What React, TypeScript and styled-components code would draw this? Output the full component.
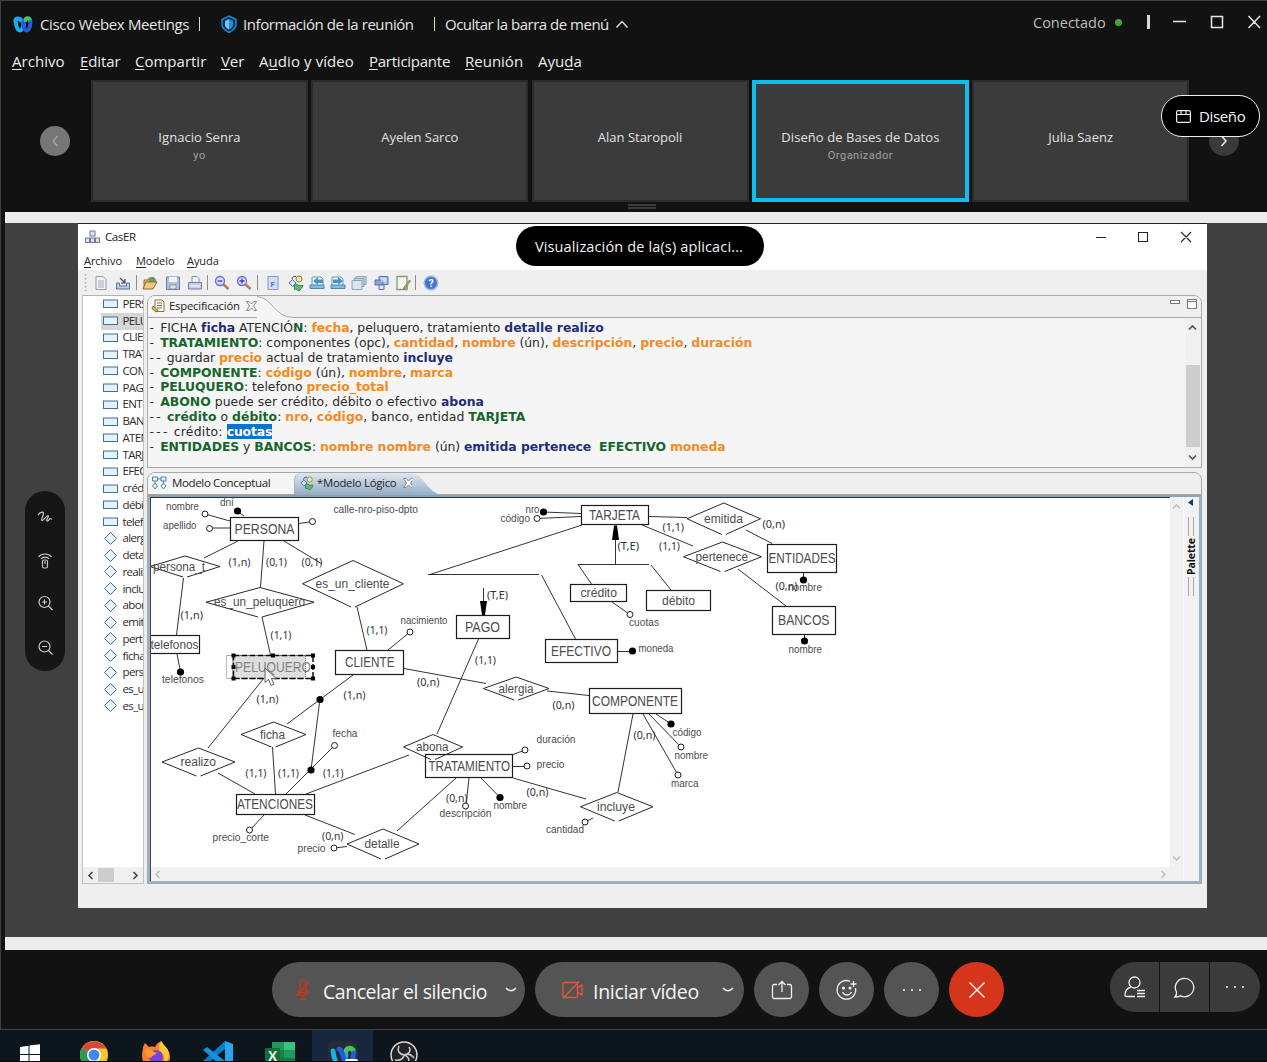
import React from 'react';
import styled, { createGlobalStyle } from 'styled-components';

const Global = createGlobalStyle`
  * { box-sizing: border-box; }
  body { margin: 0; background: #121212; overflow: hidden; }
`;

const ui = `'Open Sans', 'Noto Sans', sans-serif`;
const noto = `'Noto Sans', 'Open Sans', sans-serif`;

/* ---------- meeting window ---------- */
const Screen = styled.div`
  width: 1267px; height: 1062px; overflow: hidden; position: relative;
  display: flex; flex-direction: column; background: #121212; color: #e6e6e6;
  font-family: ${ui};
`;
const Meeting = styled.div`
  height: 1030px; flex: none; display: flex; flex-direction: column;
  border: 1px solid #414141; border-right: 0;
`;
const TitleBar = styled.header`
  height: 46px; flex: none; display: flex; align-items: center; padding-left: 12px; white-space: nowrap;
`;
const Label = styled.span<{ $size?: number; $track?: number; $w?: number; $color?: string; $dy?: number; $ml?: number }>`
  font-size: ${p => p.$size ?? 15}px; letter-spacing: ${p => p.$track ?? 0}px;
  color: ${p => p.$color ?? '#e4e4e4'}; line-height: 22px; white-space: nowrap;
  width: ${p => (p.$w ? `${p.$w}px` : 'auto')}; flex: none;
  margin-left: ${p => p.$ml ?? 0}px; padding-top: ${p => p.$dy ?? 0}px;
`;
const Bar = styled.i<{ $ml: number; $w?: number; $h?: number }>`
  flex: none; width: ${p => p.$w ?? 1}px; height: ${p => p.$h ?? 14}px; margin-left: ${p => p.$ml}px; background: #d8d8d8;
`;
const Glyph = styled.svg<{ $ml?: number }>`
  flex: none; display: block; overflow: visible; margin-left: ${p => p.$ml ?? 0}px;
`;
const Dot = styled.i`
  width: 7px; height: 7px; border-radius: 50%; background: #3faa3a; margin-left: 9px; flex: none;
`;
const WindowTools = styled.div`
  margin-left: auto; display: flex; align-items: center; height: 42px; align-self: flex-start; padding-right: 6px;
`;
const MenuBar = styled.nav`
  height: 33px; flex: none; display: flex; padding: 3px 0 0 11px;
`;
const MenuItem = styled.span<{ $w: number; $track: number }>`
  width: ${p => p.$w}px; font-size: 15px; letter-spacing: ${p => p.$track}px; line-height: 23px; color: #ececec; white-space: nowrap;
  u { text-underline-offset: 2px; text-decoration-thickness: 1px; }
`;
const Strip = styled.section`
  height: 122px; flex: none; display: flex; align-items: center;
`;
const Arrow = styled.div<{ $dim?: boolean; $ml: number }>`
  width: 30px; height: 30px; flex: none; border-radius: 50%; margin-left: ${p => p.$ml}px;
  background: ${p => (p.$dim ? '#767676' : '#3a3a3a')}; display: grid; place-items: center;
`;
const Tiles = styled.div`
  display: grid; grid-template-columns: repeat(5, 217px); gap: 3.3px; margin-left: 21px; height: 122px; flex: none;
`;
const Tile = styled.div<{ $active?: boolean }>`
  background: #3b3b3b; border: ${p => (p.$active ? '4px solid #0cbdf2' : '2px solid #2b2b2b')};
  display: flex; flex-direction: column; align-items: center; padding-top: ${p => (p.$active ? 43 : 45)}px;
`;
const TileName = styled.span<{ $track?: number }>`
  font-size: 13px; line-height: 20px; letter-spacing: ${p => p.$track ?? 0.06}px; color: #e2e2e2;
`;
const TileRole = styled.span`
  font: 11px/18px Roboto, sans-serif; letter-spacing: 0.5px; color: #a2a2a2;
`;
const Grip = styled.div`
  height: 10px; flex: none; display: flex; flex-direction: column; gap: 1px; align-items: center; padding: 2px 0 0 16px;
  i { width: 28px; height: 2px; background: #3c3c3c; }
`;
const Stage = styled.main`
  margin-left: 4px; height: 738px; flex: none; display: flex; flex-direction: column;
  border-top: 11px solid #ececec; border-bottom: 13px solid #ececec;
  background: #404040; padding-left: 73px;
`;
const LayoutButton = styled.div`
  position: absolute; left: 1161px; top: 95px; width: 99px; height: 42px; border-radius: 21px;
  border: 1.5px solid #f0f0f0; background: #000; display: flex; align-items: center; padding-left: 14px;
`;
const ShareBadge = styled.div`
  position: absolute; left: 516px; top: 226px; width: 248px; height: 40px; border-radius: 20px; background: #000;
  display: flex; justify-content: center; align-items: center; padding: 2px 2px 0 0;
`;
const SideTools = styled.div`
  position: absolute; left: 25px; top: 491px; width: 40px; height: 180px; border-radius: 20px; background: #161616;
  display: flex; flex-direction: column; align-items: center; padding-top: 18px; gap: 27.5px;
`;

/* ---------- call controls ---------- */
const Controls = styled.footer`
  height: 78px; flex: none; display: flex; padding: 12px 7px 0 271px; gap: 10px;
`;
const Pill = styled.div<{ $w: number; $pl: number }>`
  width: ${p => p.$w}px; height: 55px; border-radius: 28px; background: #545454; flex: none;
  display: flex; align-items: center; padding-left: ${p => p.$pl}px;
`;
const Round = styled.div<{ $red?: boolean }>`
  width: 55px; height: 55px; border-radius: 50%; flex: none; display: grid; place-items: center;
  background: ${p => (p.$red ? '#d5361b' : '#545454')};
`;
const Group = styled.div`
  margin-left: auto; display: grid; grid-template-columns: 49px 49px 50px; gap: 1px; width: 150px; height: 50px;
  border-radius: 25px; overflow: hidden;
`;
const GroupCell = styled.div`
  background: #3b3b3b; display: grid; place-items: center;
`;
const Taskbar = styled.div`
  height: 32px; flex: none; display: flex; background: #0d151d; border-bottom: 1px solid #05080d;
`;
const Task = styled.div<{ $on?: boolean; $w?: number }>`
  width: ${p => p.$w ?? 62}px; height: 31px; overflow: hidden; padding-top: 11px; flex: none;
  display: flex; justify-content: center; background: ${p => (p.$on ? '#17273d' : 'transparent')};
`;

/* ---------- shared application window ---------- */
const AppWindow = styled.div`
  width: 1129px; height: 685px; background: #efefef; color: #222; display: flex; flex-direction: column;
  border-top: 1px solid #1d2340; flex: none;
`;
const AppTitle = styled.div`
  height: 28px; background: #fff; display: flex; align-items: center; padding: 0 15px 2px 7px; flex: none;
`;
const AppMenu = styled.div`
  height: 18px; background: #fff; display: flex; flex: none; padding-left: 6px;
`;
const MenuWord = styled.span<{ $w?: number }>`
  width: ${p => (p.$w ? `${p.$w}px` : 'auto')}; flex: none;
  font-size: 11px; line-height: 18px; letter-spacing: -0.05px; color: #222;
  u { text-underline-offset: 2px; }
`;
const AppTools = styled.div`
  height: 25px; flex: none; display: flex; align-items: center; padding: 0 0 0 6px;
`;
const Slot = styled.span<{ $w: number }>`
  width: ${p => p.$w}px; display: flex; justify-content: center; flex: none;
`;
const Divider = styled.i<{ $w: number }>`
  width: ${p => p.$w}px; height: 15px; flex: none;
  background: linear-gradient(#8c8c8c, #8c8c8c) center / 1px 100% no-repeat;
`;
const Body = styled.div`
  height: 589px; flex: none; display: flex; gap: 3px; padding-left: 4px;
`;
const Tree = styled.aside`
  width: 62px; height: 589px; flex: none; display: flex; flex-direction: column; background: #fff;
  border: 1px solid #c2c2c2; border-top-color: #b5b5b5; overflow: hidden;
`;
const TreeRows = styled.div`
  height: 571px; flex: none; overflow: hidden;
`;
const TreeRow = styled.div<{ $on?: boolean }>`
  height: 16.76px; margin-left: 18px; display: flex; align-items: center; overflow: hidden; white-space: nowrap;
  background: ${p => (p.$on ? '#d6d6d6' : 'transparent')};
  svg { flex: none; margin-left: 2px; width: 15px; }
  span { font-size: 11.5px; letter-spacing: -0.65px; line-height: 16px; margin-left: 4.5px; padding-bottom: 1px; color: #2c2c2c; }
`;
const HScroll = styled.div<{ $h: number; $pad: number }>`
  height: ${p => p.$h}px; flex: none; background: #f0f0f0; display: flex; align-items: center;
  padding: 0 ${p => p.$pad}px; justify-content: space-between;
`;
const Thumb = styled.i`
  width: 16px; height: 14px; background: #cdcdcd; margin-right: 14px;
`;
const Right = styled.div`
  width: 1055px; flex: none; display: flex; flex-direction: column; gap: 4px;
`;
const Panel = styled.section<{ $h: number }>`
  height: ${p => p.$h}px; flex: none; border: 1px solid #a8a8a8; border-radius: 8px 8px 0 0; overflow: hidden;
  display: flex; flex-direction: column; background: #f0f0f0;
`;
const TabBar = styled.div<{ $h: number }>`
  height: ${p => p.$h}px; flex: none; display: flex; background: #efefef; border-bottom: 1px solid #a8a8a8;
`;
const Tab = styled.div<{ $w: number; $pl: number; $active?: boolean }>`
  width: ${p => p.$w}px; display: flex; align-items: center; padding: 0 0 1px ${p => p.$pl}px; flex: none;
  background: ${p => (p.$active ? 'linear-gradient(#dfe7ef, #95afc9)' : '#f5f5f5')};
  border-radius: 7px 0 0 0; border-left: ${p => (p.$active ? '1px solid #a9b3bd' : '0')};
`;
const TabEnd = styled.svg`
  flex: none; display: block; margin-left: -1px;
`;
const PanelBtns = styled.div`
  margin-left: auto; display: flex; padding: 3px 4px 0 0; gap: 7px;
`;
const SpecArea = styled.div`
  flex: 1; display: flex; background: #f5f5f5; min-height: 0;
`;
const Spec = styled.div`
  width: 1037px; padding: 2px 0 0 2px; font-family: 'DejaVu Sans', Verdana, sans-serif; font-size: 12.4px; color: #2b2b2b;
`;
const Dash = styled.span`
  letter-spacing: 2.25px; margin-left: -0.5px;
`;
const Line = styled.p<{ $track?: number }>`
  margin: 0; height: 14.87px; line-height: 15px; white-space: pre; letter-spacing: ${p => p.$track ?? 0}px;
  b { font-weight: 700; }
  b.g { color: #17652c; } b.o { color: #f58a22; } b.n { color: #1f2d78; }
  b.sel { background: #0a72cf; color: #fff; letter-spacing: -0.15px; }
`;
const VScroll = styled.div<{ $w: number; $pb?: number }>`
  width: ${p => p.$w}px; flex: none; background: #f0f0f0; display: flex; flex-direction: column; align-items: center;
  justify-content: space-between; padding: 6px 0 ${p => p.$pb ?? 6}px;
`;
const VThumb = styled.i`
  width: 14px; height: 82px; background: #cdcdcd; margin-top: 22px; margin-bottom: -5px;
`;
const Canvas = styled.div`
  flex: 1; min-height: 0; display: flex; border: 2px solid #9fb0c6; border-top-color: #8c9fb8; background: #f0f0f0;
`;
const CanvasMain = styled.div`
  width: 1020px; flex: none; display: flex; flex-direction: column; border-left: 1px solid #444;
`;
const Diagram = styled.svg`
  display: block; width: 1019px; height: 370px; background: #fff; border-top: 1px solid #333; flex: none;
`;
const Palette = styled.div`
  width: 15px; flex: none; display: flex; flex-direction: column; align-items: center; padding: 2px 1px 0 0; gap: 11px; background: #f2f2f2;
  border-left: 1px solid #fafafa;
  b { writing-mode: vertical-rl; transform: rotate(180deg); font: 700 10.5px ${noto}; color: #111; line-height: 12px; margin: -9px 0; letter-spacing: -0.1px; }
`;
const Ribs = styled.i`
  width: 6px; height: 19px; border-left: 1px solid #aaa; border-right: 1px solid #aaa; flex: none;
`;

/* ---------- diagram primitives ---------- */
const ink = '#1c1c1c';
type TP = { x: number; to: number; y: number; s: number; children: string; c?: string; f?: string };
const T = ({ x, to, y, s, children, c = '#4c4c4c', f = "'Liberation Sans', Arial, sans-serif" }: TP) => (
  <text x={x} y={y + s * 0.35} fontSize={s} fontFamily={f} fill={c} textLength={to - x} lengthAdjust="spacingAndGlyphs">{children}</text>
);
const boxes: [string, number, number, number, number, number, number, number][] = [
  ['PERSONA', 230.5, 517.5, 298.5, 540.5, 234.5, 294.5, 14],
  ['CLIENTE', 335.5, 650.5, 403.5, 674.5, 345, 394.5, 14],
  ['ATENCIONES', 236.5, 794.5, 314.5, 814.5, 237, 313, 14],
  ['TRATAMIENTO', 425.5, 754.5, 512.5, 777.5, 428.5, 510, 14],
  ['PAGO', 456.5, 615.5, 509.5, 638.5, 465, 500, 14],
  ['COMPONENTE', 589.5, 688.5, 681.5, 713.5, 592, 678, 14],
  ['TARJETA', 581.5, 505.5, 648.5, 524.5, 589, 640, 14],
  ['EFECTIVO', 545.5, 639.5, 617.5, 662.5, 551, 611, 14],
  ['ENTIDADES', 767.5, 544.5, 836.5, 572.5, 768.5, 835.5, 14],
  ['BANCOS', 772.5, 606.5, 835.5, 634.5, 778, 829.5, 14],
  ['crédito', 570.5, 584.5, 626.5, 601.5, 580.5, 617, 12.5],
  ['débito', 646.5, 590.5, 710.5, 610.5, 662, 695, 12.5],
  ['telefonos', 140.5, 635.5, 199.5, 653.5, 150.5, 198.5, 12.5],
];
const diamonds: [string, number, number, number, number, number, number][] = [
  ['persona_t', 150, 220, 556, 577, 153, 205],
  ['es_un_peluquero', 206, 314, 587.5, 617, 214, 305],
  ['es_un_cliente', 302.5, 403.5, 560.5, 607, 315.5, 389.5],
  ['ficha', 241, 306, 722, 747, 260, 285],
  ['realizo', 162, 235, 748, 776, 180.5, 216],
  ['detalle', 347, 419, 829, 859, 364.5, 399.5],
  ['abona', 403.5, 462.5, 734.5, 759.5, 416, 448.5],
  ['alergia', 483.5, 549, 677, 700, 498.5, 533.5],
  ['incluye', 580.5, 653, 792.5, 821, 597, 635],
  ['emitida', 687, 760.5, 503, 534.5, 704, 743],
  ['pertenece', 683.5, 761.5, 542, 571.5, 695.5, 748],
];
const links: number[][] = [
  [205, 514, 230, 521], [237, 511, 244, 516], [210, 528, 230, 528], [312, 521.5, 299, 523.5],
  [238, 541, 204, 558], [264, 541, 260.5, 587], [284, 541, 322, 564], [183.5, 578, 176.5, 635], [177, 654, 180.5, 672],
  [262, 617, 270.5, 655], [264, 678, 208, 748], [357, 607, 367, 650], [388, 650, 410, 632], [353, 675, 287, 724],
  [320, 699, 311, 770], [334.5, 745.5, 286, 794], [404, 668.5, 486, 683.5], [272.5, 747, 275.5, 794], [218, 773, 255, 794],
  [264, 815, 250, 830], [305, 815, 355, 834.5], [334, 848, 347, 846.5], [409, 755, 306, 794], [525, 750, 513, 754.5],
  [513, 766.5, 527, 766.5], [478.5, 639, 437, 734], [547, 691, 589, 695.5], [633, 714, 618, 792], [643, 714, 678, 775],
  [649, 714, 681, 747], [656, 714, 671, 724], [513, 778, 586, 799], [585, 822, 593, 818], [456, 778, 397, 831],
  [469, 778, 466, 806], [481, 778, 500, 797.5], [543.5, 512, 581, 513.5], [537, 518.5, 581, 516.5], [582, 525, 430, 574.5],
  [428, 574.5, 539, 574.5], [541.5, 575, 575.5, 639], [615.5, 564, 615.5, 530], [578, 564.5, 649, 564.5], [578, 564.5, 591.5, 584],
  [651, 565, 671, 590], [612, 602, 630, 614.5], [618, 651.5, 632.5, 651.5], [649, 516.5, 687, 517.5], [642, 525, 693, 546],
  [746, 530, 772, 543.5], [803.5, 573, 803.5, 580], [738, 569, 786, 606], [804.5, 635, 804.5, 641], [483.5, 588, 483.5, 605],
];
const open: number[][] = [[205, 514], [209.5, 528.5], [312.5, 521.5], [410, 632], [334.5, 745.5], [249.5, 830], [334, 848], [525, 750], [527, 766],
  [678, 775], [681, 747], [585, 822], [465.5, 806], [537, 518.5], [630, 614.5]];
const solid: number[][] = [[237.5, 511], [180.5, 672], [320, 699.5], [311, 770], [671, 724], [500, 797.5], [543.5, 512], [632.5, 651], [803.5, 580], [804.5, 641]];
const attrs: [string, number, number, number][] = [
  ['nombre', 166, 199, 506.5], ['dni', 220, 233.5, 502.5], ['apellido', 163, 196.5, 525.5], ['calle-nro-piso-dpto', 333.5, 418, 509.5],
  ['telefonos', 162, 204, 679.5], ['nacimiento', 400.5, 447.5, 620.5], ['fecha', 332.5, 357.5, 733.5], ['precio_corte', 212.5, 269, 837.5],
  ['precio', 297.5, 325.5, 848], ['duración', 536.5, 575.5, 739.5], ['precio', 536.5, 564.5, 764.5], ['código', 672.5, 701.5, 732],
  ['nombre', 674.5, 708, 755], ['marca', 671, 698.5, 783], ['cantidad', 546, 584, 829.5], ['descripción', 439.5, 491.5, 813.5],
  ['nombre', 493.5, 527, 805.5], ['nro', 525.5, 539.5, 509.5], ['código', 500.5, 530, 518], ['cuotas', 629, 659, 622.5],
  ['moneda', 638.5, 673.5, 648.5], ['nombre', 788, 822, 587.5], ['nombre', 788.5, 822, 649.5],
];
const cards: [string, number, number, number][] = [
  ['(1,n)', 228.5, 250.5, 561.5], ['(0,1)', 266, 287, 561.5], ['(0,1)', 301.5, 322.5, 561.5], ['(1,n)', 180.5, 203, 615], ['(1,1)', 270.5, 291.5, 635],
  ['(1,n)', 256.5, 278.5, 699], ['(1,1)', 366.5, 387.5, 629.5], ['(1,n)', 343.5, 365.5, 695], ['(0,n)', 417, 439.5, 681.5], ['(1,1)', 245.5, 266.5, 773],
  ['(1,1)', 278, 299, 773], ['(1,1)', 323, 343.5, 773], ['(0,n)', 322, 343.5, 835.5], ['(1,1)', 475, 496, 660], ['(0,n)', 552.5, 574.5, 704.5],
  ['(0,n)', 633.5, 655.5, 734.5], ['(0,n)', 526.5, 548.5, 792], ['(0,n)', 446, 467.5, 798], ['(T,E)', 487, 508, 595], ['(T,E)', 617.5, 639, 545.5],
  ['(1,1)', 662.5, 684, 527], ['(1,1)', 659, 680, 545.5], ['(0,n)', 762.5, 785, 523.5], ['(0,n)', 775.5, 797.5, 585.5],
];

const ErDiagram = () => (
  <Diagram viewBox="151 498 1019 369">
    {links.map((l, i) => <line key={i} x1={l[0]} y1={l[1]} x2={l[2]} y2={l[3]} stroke={ink} strokeWidth={0.9} />)}
    {boxes.map(b => (
      <g key={b[0]}>
        <rect x={b[1]} y={b[2]} width={b[3] - b[1]} height={b[4] - b[2]} fill={b[0] === 'TRATAMIENTO' ? 'none' : '#fff'} stroke={ink} strokeWidth={1.2} />
        <T x={b[5]} to={b[6]} y={(b[2] + b[4]) / 2} s={b[7]}>{b[0]}</T>
      </g>
    ))}
    {diamonds.map(d => {
      const cx = (d[1] + d[2]) / 2, cy = (d[3] + d[4]) / 2;
      return (
        <g key={d[0]}>
          <path d={`M${d[1]} ${cy}L${cx} ${d[3]}L${d[2]} ${cy}L${cx + 2} ${d[4]}M${cx - 2} ${d[4]}L${d[1]} ${cy}`} fill="none" stroke={ink} strokeWidth={0.95} />
          <T x={d[5]} to={d[6]} y={cy} s={12}>{d[0]}</T>
        </g>
      );
    })}
    {open.map((c, i) => <circle key={i} cx={c[0]} cy={c[1]} r={3} fill="#fff" stroke={ink} />)}
    {solid.map((c, i) => <circle key={i} cx={c[0]} cy={c[1]} r={3.6} fill="#000" />)}
    <path d="M480 601h7l-2 14h-3zM614 525.500h3l2 14.500h-7z" fill="#000" />
    {attrs.map((a, i) => <T key={i} x={a[1]} to={a[2]} y={a[3]} s={10.5}>{a[0]}</T>)}
    {cards.map((a, i) => <T key={i} x={a[1]} to={a[2]} y={a[3]} s={11.5} f={noto} c="#333">{a[0]}</T>)}
    <rect x="233" y="655" width="80" height="23.500" fill="#fff" />
    <rect x="228" y="655.500" width="77.500" height="23" fill="#dfdfdf" stroke="#555" strokeDasharray="1 1" />
    <rect x="226.500" y="655.500" width="6" height="23" fill="#fff" stroke="#777" strokeDasharray="1 1" />
    <rect x="233.500" y="655.500" width="79.500" height="23" fill="none" stroke="#000" strokeWidth="1.400" strokeDasharray="6 2" />
    {[[233.5, 655.5], [273, 655.5], [313, 655.5], [233.5, 667], [313, 667], [233.5, 678.5], [313, 678.5]].map((p, i) => (
      <rect key={i} x={p[0] - 2} y={p[1] - 2} width="4" height="4" fill="#000" />
    ))}
    <T x={235} to={311} y={667} s={14} c="#808080">PELUQUERO</T>
    <path d="M265 668v14.500l3.500-3 2.500 6 3-1.200-2.500-5.800h4.800z" fill="#f4f4f4" stroke="#555" strokeWidth="0.900" />
  </Diagram>
);

const WebexLogo = ({ w = 20 }: { w?: number }) => (
  <Glyph width={w} height={w * 0.85} viewBox="0 0 20 17" fill="none" strokeWidth="4" strokeLinecap="round">
    <path d="M2.500 4.500C3 9 4 14.500 7 14.500c2 0 3-3 3.800-6" stroke="#10b4ea" />
    <path d="M12 4.500C13 1.500 16.500 1.500 17.200 5" stroke="#3fc65f" />
    <path d="M7.500 3C10 3.500 10 14.500 13.500 14.500c2.500 0 3.800-4 4-8.500" stroke="#2459e0" />
    <path d="M2.500 4.500C3 2 6 2 7.500 4" stroke="#14a9f0" />
  </Glyph>
);
const Chevron = ({ d, c = '#ddd', w = 8, h = 8, sw = 1.2, ml = 0 }: { d: string; c?: string; w?: number; h?: number; sw?: number; ml?: number }) => (
  <Glyph $ml={ml} width={w} height={h} viewBox={`0 0 ${w} ${h}`}><path d={d} fill="none" stroke={c} strokeWidth={sw} /></Glyph>
);
const Cross = () => (
  <Glyph $ml={7} width="11" height="10" viewBox="0 0 11 10"><path d="M.5.5h2.500L5.500 3 8 .5h2.500L7.500 5l3 4.500H8L5.500 7 3 9.500H.5L3.500 5z" fill="#fff" stroke="#777" strokeWidth=".9" /></Glyph>
);
const Linked = ({ s = 15 }: { s?: number }) => (
  <Glyph width={s} height={s} viewBox="0 0 16 16" fill="none">
    <circle cx="11" cy="4" r="3" fill="#f3e7a8" stroke="#8a8550" />
    <path d="M4.500 4.500L8 8l-3.500 3.500L1 8z" fill="#d8e9fb" stroke="#3a6ea8" />
    <path d="M6 10.500l3-1.500 1 1.500h5l-1.500 3L11 16l-3-2-1.500.5z" fill="#5fbb6c" stroke="#2a7a3a" strokeWidth=".8" />
    <path d="M4 4c0-2 2-3 4-2.500" stroke="#333" />
  </Glyph>
);

const art: Record<string, React.ReactNode> = {
  page: <><path d="M3 1.500h7l3 3v10H3z" fill="#f5f3ea" stroke="#8b93a5" /><path d="M5 6h6M5 8h6M5 10h6M5 12h6" stroke="#8fa6c8" /></>,
  importer: <><path d="M1.500 8v6h13V8h-3v3h-7V8z" fill="#b5cde8" stroke="#4a6a96" /><path d="M5 3l5 5M10 4v4H6" fill="none" stroke="#333" strokeWidth="1.200" /></>,
  open: <><path d="M2 13V5h4l1-2h5v4" fill="#e9b75a" stroke="#8b5c20" /><path d="M7 5c2-4 7-3 7 2H8z" fill="#4aa05a" stroke="#2a7a3a" strokeWidth=".6" /><path d="M1 14l3-7h11l-4 7z" fill="#f0c674" stroke="#8b5c20" /></>,
  save: <><path d="M1.500 2h13v12.500h-13z" fill="#a8bdd6" stroke="#5b7393" /><path d="M4 2h8v5H4z" fill="#f0f4f4" /><path d="M5 10h6v4H5z" fill="#dfe9cf" stroke="#5b7393" strokeWidth=".7" /></>,
  print: <><path d="M5 7V1.500h5l2 2V7" fill="#eef3fb" stroke="#7a86b8" /><path d="M1.500 7.500h13V14h-13z" fill="#c3cbe6" stroke="#6772a8" /><path d="M3 11h10" stroke="#fff" /></>,
  out: <><path d="M9 9l5.500 5" stroke="#b9722e" strokeWidth="2.500" /><circle cx="6" cy="6" r="4.500" fill="#d9dcff" stroke="#5a5fd0" strokeWidth="1.300" /><path d="M3.500 6h5" stroke="#2b2f9a" strokeWidth="1.300" /></>,
  in: <><path d="M9 9l5.500 5" stroke="#b9722e" strokeWidth="2.500" /><circle cx="6" cy="6" r="4.500" fill="#d9dcff" stroke="#5a5fd0" strokeWidth="1.300" /><path d="M3.500 6h5M6 3.500v5" stroke="#2b2f9a" strokeWidth="1.300" /></>,
  doc: <><path d="M3 1.500h10v13H3z" fill="#cfdef5" stroke="#7690c0" /><text x="5.500" y="11.500" fontSize="8" fontWeight="700" fill="#5560c8" fontFamily="Roboto, sans-serif">F</text></>,
  left: <><path d="M3 2h9l2 2v9H3z" fill="#f3f7fb" stroke="#6a8db0" /><path d="M1 13.500h14V10H1z" fill="#7fb5dd" stroke="#3b7cab" /><path d="M4 6l5-4v2.500h5v3.500H9V10z" fill="#2f8fc4" /></>,
  right: <><path d="M2 2h9l2 2v9H2z" fill="#f3f7fb" stroke="#6a8db0" /><path d="M1 13.500h14V10H1z" fill="#7fb5dd" stroke="#3b7cab" /><path d="M13 6L8 2v2.500H3V8h5v2z" fill="#2f8fc4" /></>,
  stack: <><path d="M5 1.500h10v8H5z" fill="#bcd3e4" stroke="#7e9cb4" /><path d="M3 3.500h10v8H3z" fill="#bcd3e4" stroke="#7e9cb4" /><path d="M1 5.500h10v9H1z" fill="#d5e4ef" stroke="#7e9cb4" /></>,
  boxes: <><path d="M6 1.500h9v8H6z" fill="#a9bfe6" stroke="#4a68a8" /><path d="M2 5h8v5H2z" fill="#7d9bd6" stroke="#4a68a8" /><path d="M6 10h5v4.500H6z" fill="#dbe5f7" stroke="#4a68a8" /><path d="M8 4h5M8 6h5" stroke="#fff" /></>,
  edit: <><path d="M2 1.500h10v13H2z" fill="#f2f7ee" stroke="#7d8f7a" strokeWidth="1.300" /><path d="M14.500 5L9 12l-1 2.500L10.500 13 15.500 6z" fill="#c9a05a" stroke="#80602a" strokeWidth=".7" /><path d="M12 10v4H8" stroke="#4aa05a" fill="none" /></>,
  help: <><circle cx="8" cy="8" r="6.700" fill="#3566c4" stroke="#8fb0ea" strokeWidth="1.500" /><text x="8" y="11.800" textAnchor="middle" fontSize="10.500" fontWeight="700" fill="#fff" fontFamily="Roboto, sans-serif">?</text></>,
};
const Tool = ({ n, w = 21.6 }: { n: string; w?: number }) => (
  <Slot $w={w}>{n === 'link' ? <Linked s={16} /> : <svg width="16" height="16" viewBox="0 0 16 16" opacity="0.9">{art[n]}</svg>}</Slot>
);

const entities = ['PERSONA', 'PELUQUERO', 'CLIENTE', 'TRATAMIENTO', 'COMPONENTE', 'PAGO', 'ENTIDADES', 'BANCOS', 'ATENCIONES', 'TARJETA', 'EFECTIVO', 'crédito', 'débito', 'telefonos'];
const relations = ['alergia', 'detalle', 'realizo', 'incluye', 'abona', 'emitida', 'pertenece', 'ficha', 'persona_t', 'es_un_peluquero', 'es_un_cliente'];

const CasER = () => (
  <AppWindow>
    <AppTitle>
      <Glyph width="15" height="14" viewBox="0 0 15 14" fill="#dfe3f2" stroke="#6f7896">
        <rect x="5" y="1" width="5" height="5" /><rect x=".5" y="8" width="4" height="4.500" /><rect x="5.500" y="8" width="4" height="4.500" /><rect x="10.500" y="8" width="4" height="4.500" />
      </Glyph>
      <Label $size={11.5} $color="#222" $ml={5} $w={31} $track={-0.4}>CasER</Label>
      <Glyph $ml={960} width="96" height="12" viewBox="0 0 96 12" fill="none" stroke="#222" strokeWidth="1.100">
        <path d="M0 6.500h10M42.500 1.500h9v9h-9zM85 1l10 10M95 1L85 11" />
      </Glyph>
    </AppTitle>
    <AppMenu>
      <MenuWord $w={52}><u>A</u>rchivo</MenuWord><MenuWord $w={51}><u>M</u>odelo</MenuWord><MenuWord><u>A</u>yuda</MenuWord>
    </AppMenu>
    <AppTools>
      <Glyph width="3" height="17" viewBox="0 0 3 17"><path d="M1.500 0v17" stroke="#aaa" strokeWidth="1.500" strokeDasharray="1.500 2.500" /></Glyph>
      <Slot $w={2.5} />
      <Tool n="page" w={22} /><Tool n="importer" w={22} /><Divider $w={5} />
      <Tool n="open" w={23.5} /><Tool n="save" w={22} /><Tool n="print" w={21} /><Divider $w={5} />
      <Tool n="out" w={23.5} /><Tool n="in" w={21} /><Divider $w={6.5} />
      <Tool n="doc" w={24} /><Tool n="link" w={21} /><Tool n="left" w={21} /><Tool n="right" w={21.5} /><Tool n="stack" w={21.5} /><Tool n="boxes" w={22} /><Tool n="edit" w={21} /><Divider $w={5} />
      <Tool n="help" w={25} />
    </AppTools>
    <Body>
      <Tree>
        <TreeRows>
          {entities.map((e, i) => (
            <TreeRow key={e} $on={i === 1}>
              <svg width="15" height="10" viewBox="0 0 15 10"><rect x=".5" y="1" width="14" height="7.500" fill="#e4f2fc" stroke="#3e6f9f" /></svg><span>{e}</span>
            </TreeRow>
          ))}
          {relations.map(e => (
            <TreeRow key={e}>
              <svg width="15" height="14" viewBox="0 0 15 14"><path d="M7.500 .5l6 6-6 6-6-6z" fill="#eaf5fd" stroke="#3e6f9f" /></svg><span>{e}</span>
            </TreeRow>
          ))}
        </TreeRows>
        <HScroll $h={16} $pad={4}>
          <Chevron d="M5.500 1L2 4.500 5.500 8" c="#444" w={6} h={9} sw={1.6} /><Thumb /><Chevron d="M.5 1L4 4.500.5 8" c="#444" w={6} h={9} sw={1.6} />
        </HScroll>
      </Tree>
      <Right>
        <Panel $h={173}>
          <TabBar $h={22}>
            <Tab $w={110} $pl={4}>
              <Glyph width="13" height="14" viewBox="0 0 13 14"><path d="M3 1h7l2 2v9.500H3z" fill="#fff8dc" stroke="#8a7440" /><path d="M5 4h5M5 6.500h5M5 9h5" stroke="#5a78b0" /><path d="M1 7l5 4-1 2-5-3z" fill="#e0b84a" stroke="#7a6020" strokeWidth=".7" /></Glyph>
              <Label $size={11.3} $color="#222" $ml={4} $w={70} $track={-0.2}>Especificación</Label><Cross />
            </Tab>
            <TabEnd width="46" height="22" viewBox="0 0 46 22"><path d="M0 0C18 0 18 21.500 42 21.500V22H0z" fill="#f5f5f5" /><path d="M-10 .5H0C14 .5 18 21.500 36 21.500H46" fill="none" stroke="#a8a8a8" /></TabEnd>
            <PanelBtns>
              <Glyph width="10" height="10" viewBox="0 0 10 10"><rect x=".5" y="1.500" width="9" height="3" fill="#fff" stroke="#777" /></Glyph>
              <Glyph width="10" height="10" viewBox="0 0 10 10"><rect x=".5" y=".5" width="9" height="9" fill="#fff" stroke="#777" /><path d="M0 2.500h10" stroke="#777" /></Glyph>
            </PanelBtns>
          </TabBar>
          <SpecArea>
            <Spec>
              <Line $track={-0.035}><Dash>-</Dash> FICHA <b className="n">ficha</b> ATENCIÓ<b className="g">N</b>: <b className="o">fecha</b>, peluquero, tratamiento <b className="n">detalle realizo</b></Line>
              <Line $track={-0.03}><Dash>-</Dash> <b className="g">TRATAMIENTO</b>: componentes (opc), <b className="o">cantidad</b>, <b className="o">nombre</b> (ún), <b className="o">descripción</b>, <b className="o">precio</b>, <b className="o">duración</b></Line>
              <Line $track={-0.07}><Dash>--</Dash> guardar <b className="o">precio</b> actual de tratamiento <b className="n">incluye</b></Line>
              <Line $track={-0.03}><Dash>-</Dash> <b className="g">COMPONENTE</b>: <b className="o">código</b> (ún), <b className="o">nombre</b>, <b className="o">marca</b></Line>
              <Line $track={-0.04}><Dash>-</Dash> <b className="g">PELUQUERO</b>: telefono <b className="o">precio_total</b></Line>
              <Line $track={0.03}><Dash>-</Dash> <b className="g">ABONO</b> puede ser crédito, débito o efectivo <b className="n">abona</b></Line>
              <Line $track={0.03}><Dash>--</Dash> <b className="g">crédito</b> o <b className="g">débito</b>: <b className="o">nro</b>, <b className="o">código</b>, banco, entidad <b className="g">TARJETA</b></Line>
              <Line $track={0.2}><Dash>---</Dash> crédito: <b className="sel">cuotas</b></Line>
              <Line $track={-0.045}><Dash>-</Dash> <b className="g">ENTIDADES</b> y <b className="g">BANCOS</b>: <b className="o">nombre nombre</b> (ún) <b className="n">emitida pertenece</b>  <b className="g">EFECTIVO</b> <b className="o">moneda</b></Line>
            </Spec>
            <VScroll $w={15}>
              <Chevron d="M1 5.500L4.500 2 8 5.500" c="#555" w={9} h={7} sw={1.7} /><VThumb /><Chevron d="M1 1.500L4.500 5 8 1.500" c="#555" w={9} h={7} sw={1.7} />
            </VScroll>
          </SpecArea>
        </Panel>
        <Panel $h={412}>
          <TabBar $h={22}>
            <Tab $w={146} $pl={4}>
              <Glyph width="15" height="14" viewBox="0 0 15 14" fill="#e8f3fc" stroke="#4a83b8"><path d="M.5 1h5v4h-5zM9 1h5v4H9zM5.500 3H9M3 5v2M11.500 5v2M3 7l2.500 3L3 13 .5 10zM11.500 7l2.500 3-2.500 3L9 10z" /></Glyph>
              <Label $size={11.5} $color="#222" $ml={5} $track={-0.35}>Modelo Conceptual</Label>
            </Tab>
            <Tab $w={119} $pl={5} $active>
              <Linked s={14} />
              <Label $size={11.3} $color="#222" $ml={3} $w={79} $track={-0.25}>*Modelo Lógico</Label><Cross />
            </Tab>
            <TabEnd width="30" height="22" viewBox="0 0 30 22"><defs><linearGradient id="tg" x2="0" y2="1"><stop stopColor="#dfe7ef" /><stop offset="1" stopColor="#95afc9" /></linearGradient></defs><path d="M0 0C12 1 14 19 30 22H0z" fill="url(#tg)" /></TabEnd>
          </TabBar>
          <Canvas>
            <CanvasMain>
              <ErDiagram />
              <HScroll $h={14} $pad={3}>
                <Chevron d="M5.500 1L2 4.500 5.500 8" c="#bbb" w={6} h={9} sw={1.4} /><Chevron d="M.5 1L4 4.500.5 8" c="#bbb" w={6} h={9} sw={1.4} />
              </HScroll>
            </CanvasMain>
            <VScroll $w={13} $pb={2}>
              <Chevron d="M1 5.500L4.500 2 8 5.500" c="#bbb" w={9} h={7} sw={1.4} /><Chevron d="M1 1.500L4.500 5 8 1.500" c="#bbb" w={9} h={24} sw={1.4} />
            </VScroll>
            <Palette>
              <Glyph width="5" height="7" viewBox="0 0 5 7"><path d="M5 0v7L0 3.500z" fill="#123c6b" /></Glyph>
              <Ribs /><b>Palette</b><Ribs />
            </Palette>
          </Canvas>
        </Panel>
      </Right>
    </Body>
  </AppWindow>
);

const menus: [React.ReactNode, number, number][] = [
  [<><u>A</u>rchivo</>, 68, 0.05], [<><u>E</u>ditar</>, 55, -0.1], [<><u>C</u>ompartir</>, 86, 0], [<><u>V</u>er</>, 38, -0.1],
  [<>A<u>u</u>dio y vídeo</>, 110, 0.08], [<><u>P</u>articipante</>, 96, -0.25], [<><u>R</u>eunión</>, 73, 0], [<>Ayu<u>d</u>a</>, 60, 0],
];

export default function App() {
  return (
    <Screen>
      <Global />
      <Meeting>
        <TitleBar>
          <WebexLogo />
          <Label $size={15} $ml={7} $w={149} $track={-0.35}>Cisco Webex Meetings</Label>
          <Bar $ml={10} />
          <Glyph $ml={21} width="16" height="18" viewBox="0 0 16 18"><path d="M8 1l7 3.500v5C15 13 11 16 8 17.500 5 16 1 13 1 9.500v-5z" fill="#0b2f4d" stroke="#2087d0" strokeWidth="1.500" /><path d="M8 4l4 2v4c0 2-2 3.500-4 4.500z" fill="#2190dc" /><path d="M8 4L4 6v4c0 2 2 3.500 4 4.500z" fill="#6cc4fa" /></Glyph>
          <Label $size={15} $ml={6} $w={171} $track={-0.43}>Información de la reunión</Label>
          <Bar $ml={20} />
          <Label $size={15} $ml={10} $w={165} $track={-0.5}>Ocultar la barra de menú</Label>
          <Chevron ml={6} d="M.5 7.500L6 1.500l5.500 6" w={12} h={9} sw={1.4} />
          <WindowTools>
            <Label $size={14.5} $color="#bdbdbd" $w={73} $dy={1}>Conectado</Label><Dot /><Bar $ml={25} $w={3} />
            <Glyph $ml={23} width="88" height="14" viewBox="0 0 88 14" fill="none" stroke="#e6e6e6" strokeWidth="1.500"><path d="M0 6.500h13M38.500 1.500h11v11h-11zM75.500 1l11.500 12M87 1L75.500 13" /></Glyph>
          </WindowTools>
        </TitleBar>
        <MenuBar>{menus.map((m, i) => <MenuItem key={i} $w={m[1]} $track={m[2]}>{m[0]}</MenuItem>)}</MenuBar>
        <Strip>
          <Arrow $dim $ml={39}><Chevron d="M6.500 1L2 6l4.500 5" c="#aaa" w={8} h={12} sw={1.2} /></Arrow>
          <Tiles>
            <Tile><TileName>Ignacio Senra</TileName><TileRole>yo</TileRole></Tile>
            <Tile><TileName $track={-0.05}>Ayelen Sarco</TileName></Tile>
            <Tile><TileName $track={0}>Alan Staropoli</TileName></Tile>
            <Tile $active><TileName>Diseño de Bases de Datos</TileName><TileRole>Organizador</TileRole></Tile>
            <Tile><TileName>Julia Saenz</TileName></Tile>
          </Tiles>
          <Arrow $ml={20}><Chevron d="M1.500 1L6 6l-4.500 5" c="#eee" w={8} h={12} sw={1.5} /></Arrow>
        </Strip>
        <Grip><i /><i /></Grip>
        <Stage><CasER /></Stage>
        <Controls>
          <Pill $w={253} $pl={24}>
            <Glyph width="14" height="22" viewBox="0 0 14 22" fill="none" stroke="#d1361c" strokeWidth="1.200"><rect x="4" y="1" width="6" height="13" rx="3" /><path d="M2 11v1c0 2.500 2 4.500 5 4.500s5-2 5-4.500v-1M7 16.500V20M4 20.200h6M13.500 2.500L.5 17" /></Glyph>
            <Label $size={19.5} $ml={13} $w={165} $dy={5} $track={-0.45} $color="#f4f4f4">Cancelar el silencio</Label>
            <Chevron ml={17} d="M1 1c3 3.500 7 3.500 10 0" c="#eee" w={12} h={5} sw={1.5} />
          </Pill>
          <Pill $w={209} $pl={27}>
            <Glyph width="21" height="18" viewBox="0 0 21 18" fill="none" stroke="#e8563d" strokeWidth="1.300"><rect x="1" y="1.500" width="14.500" height="15" rx="1.500" /><path d="M15.500 7l4.500-3v10l-4.500-3M1 17.500L17 .5" /></Glyph>
            <Label $size={19.5} $ml={10} $w={107} $dy={5} $track={-0.3} $color="#f4f4f4">Iniciar vídeo</Label>
            <Chevron ml={22} d="M1 1c3 3.500 7 3.500 10 0" c="#eee" w={12} h={5} sw={1.5} />
          </Pill>
          <Round><Glyph width="22" height="20" viewBox="0 0 22 20" fill="none" stroke="#eee" strokeWidth="1.300"><path d="M6 4.500H3a1.500 1.500 0 0 0-1.500 1.500v11A1.500 1.500 0 0 0 3 18.500h16a1.500 1.500 0 0 0 1.500-1.500V6A1.500 1.500 0 0 0 19 4.500h-3M11 12V1.500M7.500 5L11 1.500 14.500 5" /></Glyph></Round>
          <Round><Glyph width="22" height="22" viewBox="0 0 22 22" fill="none" stroke="#eee" strokeWidth="1.300"><path d="M14 2.300A9.300 9.300 0 1 0 19.500 9M17.500 2v6M14.500 5h6" /><path d="M6.500 13c2 4 7 4 9 0" /><circle cx="7.500" cy="9" r=".9" fill="#eee" /><circle cx="14" cy="9" r=".9" fill="#eee" /></Glyph></Round>
          <Round><Glyph width="18" height="4" viewBox="0 0 18 4" fill="#eee"><circle cx="1" cy="2" r="1.100" /><circle cx="9" cy="2" r="1.100" /><circle cx="17" cy="2" r="1.100" /></Glyph></Round>
          <Round $red><Glyph width="16" height="16" viewBox="0 0 16 16"><path d="M.5.5l15 15M15.500.5l-15 15" stroke="#fff" strokeWidth="1.400" /></Glyph></Round>
          <Group>
            <GroupCell><Glyph width="21" height="22" viewBox="0 0 21 22" fill="none" stroke="#eee" strokeWidth="1.300"><circle cx="10.500" cy="6.500" r="5.500" /><path d="M7 11c-4 1-6 4-6 8.500 0 1 .5 1 1.500 1H11M13 14.500h8M13 17.500h8M13 20.500h8" /></Glyph></GroupCell>
            <GroupCell><Glyph width="21" height="21" viewBox="0 0 21 21" fill="none" stroke="#eee" strokeWidth="1.300"><path d="M2.500 15A9.200 9.200 0 1 1 6.500 18.800C5 19.500 3 20 1 20c1.300-1.500 1.800-3 1.500-5z" /></Glyph></GroupCell>
            <GroupCell><Glyph width="18" height="4" viewBox="0 0 18 4" fill="#eee"><circle cx="1" cy="2" r="1.100" /><circle cx="9" cy="2" r="1.100" /><circle cx="17" cy="2" r="1.100" /></Glyph></GroupCell>
          </Group>
        </Controls>
      </Meeting>
      <Taskbar>
        <Task $w={60}><Glyph width="20" height="28" viewBox="0 0 20 28" fill="#fff"><path d="M0 6l8.500-1.200V13H0zM9.500 4.600L20 3.200V13H9.500zM0 14h8.500v9L0 22zM9.500 14H20v10l-10.500-1.400z" /></Glyph></Task>
        <Task $w={68}>
          <Glyph width="28" height="28" viewBox="0 0 28 28"><circle cx="14" cy="14" r="14" fill="#f9c52d" /><path d="M14 14L1.900 7A14 14 0 0 0 12 27.900L18 17z" fill="#2a9a50" /><path d="M14 14L1.900 7A14 14 0 0 1 26.100 7.500H14z" fill="#d5483c" /><circle cx="14" cy="14" r="7" fill="#fff" /><circle cx="14" cy="14" r="5.500" fill="#4387f0" /></Glyph>
        </Task>
        <Task $w={56}>
          <Glyph width="28" height="28" viewBox="0 0 28 28"><path d="M1 6l2-4 4 4c2-1 4-1 6 0 1-3 4-5 6-6 0 3 3 5 5 7 3 3 4 6 4 9 0 7-6 12-14 12S0 22 0 15c0-4 1-6 1-9z" fill="#ff7b2e" /><path d="M17 4c1-2 2-3 3-4 0 3 4 5 6 9 2 5 1 12-5 14 3-5 1-11-4-13z" fill="#ffc93a" /><circle cx="14" cy="16" r="7" fill="#7743d8" /><path d="M3 8c4-1 6 0 9 3l3 1c-2 2-5 2-6 5-4-1-6-4-6-9z" fill="#ff9a2c" /></Glyph>
        </Task>
        <Task $w={68}>
          <Glyph width="30" height="28" viewBox="0 0 30 28"><path d="M22 0l8 3v23l-8 4z" fill="#29a5ee" /><path d="M22 0v8L4 23l-4-3z" fill="#0b7cc9" /><path d="M22 28v-8L4 6 0 9z" fill="#1c8fdc" /></Glyph>
        </Task>
        <Task $w={56}>
          <Glyph width="30" height="28" viewBox="0 0 30 28"><path d="M7 1h23v27H7z" fill="#1f9a5b" /><path d="M19 1h11v8H19z" fill="#33c481" /><path d="M7 9h12v8H7z" fill="#17804a" /><path d="M19 17h11v11H7V17z" fill="#107c41" /><path d="M0 7h15v17H0z" fill="#0f7038" /><text x="7.500" y="20" textAnchor="middle" fontSize="13" fontWeight="700" fill="#fff" fontFamily="Lato, sans-serif">X</text></Glyph>
        </Task>
        <Slot $w={4} />
        <Task $on $w={61}>
          <Glyph width="30" height="28" viewBox="0 0 30 28"><rect width="30" height="30" rx="6" fill="#272c33" /><g fill="none" strokeWidth="5" strokeLinecap="round"><path d="M5 10c1 7 3 14 7 14 3 0 5-5 6-10" stroke="#14b5df" /><path d="M18 10c1-3 5-4 7-1" stroke="#3fc65f" /><path d="M11 8c4 0 4 16 10 15 3-1 4-8 5-11" stroke="#2459e0" /></g><rect x="17" y="18" width="13" height="11" rx="2" fill="#fff" /><path d="M20 21h6" stroke="#2a9a50" strokeWidth="2" /></Glyph>
        </Task>
        <Task $w={62}>
          <Glyph width="28" height="28" viewBox="0 0 28 28"><circle cx="14" cy="14" r="13" fill="#222226" stroke="#d8d8d8" strokeWidth="1.500" /><path d="M9 5c-2 5 0 8 5 9 4 1 6 4 4 9M14 14c4-2 7-1 10 3M14 14c-1 4-4 6-9 5M19 6c2 3 1 7-5 8" fill="none" stroke="#c8c8c8" strokeWidth="1.600" /></Glyph>
        </Task>
      </Taskbar>
      <SideTools>
        <Glyph width="16" height="16" viewBox="0 0 16 16" fill="none" stroke="#ccc" strokeWidth="1.200"><path d="M1 6c2-3 5-3.500 5.500-2C7 6 3.500 10.500 5 11.500S9.500 6 11 6.500 8.500 11.500 10 12s2-1 2.500-2 1 .5 2.500 0" /></Glyph>
        <Glyph width="14" height="17" viewBox="0 0 14 17" fill="none" stroke="#ccc" strokeWidth="1.100"><path d="M.5 4c3-4 10-4 13 0M2.800 6c2-2.500 6.400-2.500 8.400 0" /><rect x="4.500" y="7" width="5" height="8" rx="1.500" /><path d="M7 8v3" /></Glyph>
        <Glyph width="15" height="15" viewBox="0 0 15 15" fill="none" stroke="#ccc" strokeWidth="1.200"><circle cx="6.500" cy="5" r="5.500" /><path d="M10.500 9L14.500 13M4 5h5M6.500 2.500v5" /></Glyph>
        <Glyph width="15" height="15" viewBox="0 0 15 15" fill="none" stroke="#ccc" strokeWidth="1.200"><circle cx="6.500" cy="6.500" r="5.500" /><path d="M10.500 10.500L14.500 14.500M4 6.500h5" /></Glyph>
      </SideTools>
      <ShareBadge><Label $size={14.5} $color="#f2f2f2" $track={0.14}>Visualización de la(s) aplicaci...</Label></ShareBadge>
      <LayoutButton>
        <Glyph width="15" height="13" viewBox="0 0 15 13" fill="none" stroke="#eee" strokeWidth="1.200"><rect x=".6" y=".6" width="13.800" height="11.800" rx="1.500" /><path d="M.6 4.500h13.800M5 .6v3.900M10 .6v3.900" /></Glyph>
        <Label $size={15} $ml={8} $track={-0.35} $color="#f4f4f4">Diseño</Label>
      </LayoutButton>
    </Screen>
  );
}
